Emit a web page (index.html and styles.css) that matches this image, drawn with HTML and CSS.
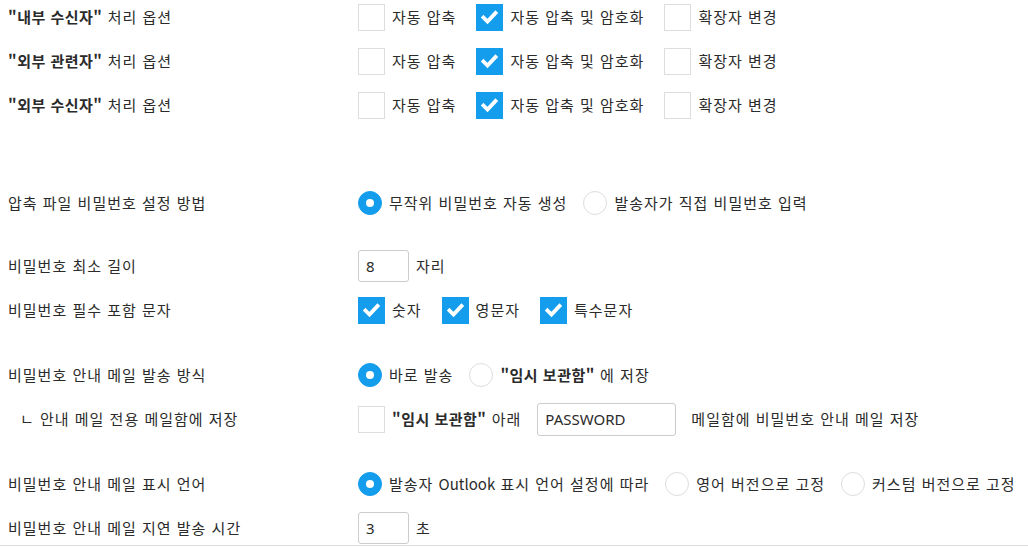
FILE: index.html
```html
<!DOCTYPE html>
<html lang="ko">
<head>
    <meta charset="UTF-8">
    <meta name="viewport" content="width=device-width, initial-scale=1.0">
    <title>압축 옵션 설정</title>
    <link rel="stylesheet" href="styles.css">
</head>
<body>

    <div class="form">
        <div class="group first">
            <div class="row">
                <div class="label"><b>"내부 수신자"</b> 처리 옵션</div>
                <div class="controls">
                    <label class="opt"><span class="box"></span>자동 압축</label>
                    <label class="opt"><span class="box on"><svg viewBox="0 0 27 27"><path d="M7.5 13.5l4 4 8-8.5"/></svg></span>자동 압축 및 암호화</label>
                    <label class="opt"><span class="box"></span>확장자 변경</label>
                </div>
            </div>
            <div class="row">
                <div class="label"><b>"외부 관련자"</b> 처리 옵션</div>
                <div class="controls">
                    <label class="opt"><span class="box"></span>자동 압축</label>
                    <label class="opt"><span class="box on"><svg viewBox="0 0 27 27"><path d="M7.5 13.5l4 4 8-8.5"/></svg></span>자동 압축 및 암호화</label>
                    <label class="opt"><span class="box"></span>확장자 변경</label>
                </div>
            </div>
            <div class="row">
                <div class="label"><b>"외부 수신자"</b> 처리 옵션</div>
                <div class="controls">
                    <label class="opt"><span class="box"></span>자동 압축</label>
                    <label class="opt"><span class="box on"><svg viewBox="0 0 27 27"><path d="M7.5 13.5l4 4 8-8.5"/></svg></span>자동 압축 및 암호화</label>
                    <label class="opt"><span class="box"></span>확장자 변경</label>
                </div>
            </div>
        </div>

        <div class="group wide">
            <div class="row">
                <div class="label">압축 파일 비밀번호 설정 방법</div>
                <div class="controls">
                    <label class="ropt"><span class="radio on"></span>무작위 비밀번호 자동 생성</label>
                    <label class="ropt"><span class="radio"></span>발송자가 직접 비밀번호 입력</label>
                </div>
            </div>
        </div>

        <div class="group">
            <div class="row">
                <div class="label">비밀번호 최소 길이</div>
                <div class="controls">
                    <input class="num" type="text" value="8" readonly>
                    <span class="unit">자리</span>
                </div>
            </div>
            <div class="row">
                <div class="label">비밀번호 필수 포함 문자</div>
                <div class="controls">
                    <label class="opt"><span class="box on"><svg viewBox="0 0 27 27"><path d="M7.5 13.5l4 4 8-8.5"/></svg></span>숫자</label>
                    <label class="opt"><span class="box on"><svg viewBox="0 0 27 27"><path d="M7.5 13.5l4 4 8-8.5"/></svg></span>영문자</label>
                    <label class="opt"><span class="box on"><svg viewBox="0 0 27 27"><path d="M7.5 13.5l4 4 8-8.5"/></svg></span>특수문자</label>
                </div>
            </div>
        </div>

        <div class="group">
            <div class="row">
                <div class="label">비밀번호 안내 메일 발송 방식</div>
                <div class="controls">
                    <label class="ropt"><span class="radio on"></span>바로 발송</label>
                    <label class="ropt"><span class="radio"></span><span><b>"임시 보관함"</b> 에 저장</span></label>
                </div>
            </div>
            <div class="row">
                <div class="label sub">ㄴ 안내 메일 전용 메일함에 저장</div>
                <div class="controls">
                    <label class="opt"><span class="box"></span><span><b>"임시 보관함"</b> 아래</span></label>
                    <input class="folder" type="text" value="PASSWORD" readonly>
                    <span class="after">메일함에 비밀번호 안내 메일 저장</span>
                </div>
            </div>
        </div>

        <div class="group last">
            <div class="row">
                <div class="label">비밀번호 안내 메일 표시 언어</div>
                <div class="controls">
                    <label class="ropt"><span class="radio on"></span><span>발송자 <span class="latin">Outlook</span> 표시 언어 설정에 따라</span></label>
                    <label class="ropt"><span class="radio"></span>영어 버전으로 고정</label>
                    <label class="ropt"><span class="radio"></span>커스텀 버전으로 고정</label>
                </div>
            </div>
            <div class="row">
                <div class="label">비밀번호 안내 메일 지연 발송 시간</div>
                <div class="controls">
                    <input class="num" type="text" value="3" readonly>
                    <span class="unit">초</span>
                </div>
            </div>
        </div>
    </div>

</body>
</html>
```

FILE: styles.css
```css
body { margin: 0; background: white; color: #2b2b2b; font-family: "Noto Sans CJK KR", "Noto Sans", sans-serif; font-size: 15px; letter-spacing: 1px; line-height: 20px; overflow: hidden; }
b { letter-spacing: 0.5px; }
.latin { letter-spacing: 0; }
.form { padding: 0 8px; }
.group { display: flex; flex-direction: column; gap: 10px; margin-top: 31px; }
.group.first { margin-top: 0; }
.group.wide { margin-top: 64px; margin-bottom: -2px; }
.group.last { border-bottom: 1px solid #ddd; margin-left: -8px; margin-right: -8px; padding: 0 8px; }
.row { display: flex; align-items: center; height: 34px; }
.label { width: 350px; flex-shrink: 0; }
.label.sub { padding-left: 12px; width: 338px; }
.controls { display: flex; align-items: center; white-space: nowrap; }
.opt { display: flex; align-items: center; margin-right: 20px; }
.ropt { display: flex; align-items: center; margin-right: 16px; }
.box { width: 27px; height: 27px; box-sizing: border-box; border: 1px solid #ddd; margin-right: 7px; display: flex; }
.box.on { background: #159ded; border-color: #159ded; }
.box svg { width: 27px; height: 27px; margin: -1px; }
.box path { fill: none; stroke: white; stroke-width: 3.8; stroke-linecap: square; }
.radio { width: 24px; height: 24px; box-sizing: border-box; border: 1px solid #ddd; border-radius: 50%; margin-right: 7px; display: flex; align-items: center; justify-content: center; }
.radio.on { background: #159ded; border-color: #159ded; }
.radio.on::after { content: ""; width: 8px; height: 8px; border-radius: 50%; background: white; }
input { font-family: "Noto Sans", "Noto Sans CJK KR", sans-serif; font-size: 15px; color: #2b2b2b; border: 1px solid #ccc; border-radius: 3px; box-sizing: border-box; padding: 0 0 0 7px; outline: none; letter-spacing: 0; }
.num { width: 51px; height: 32px; margin-right: 7px; }
.folder { width: 139px; height: 33px; margin-left: -4px; margin-right: 15px; }
```
